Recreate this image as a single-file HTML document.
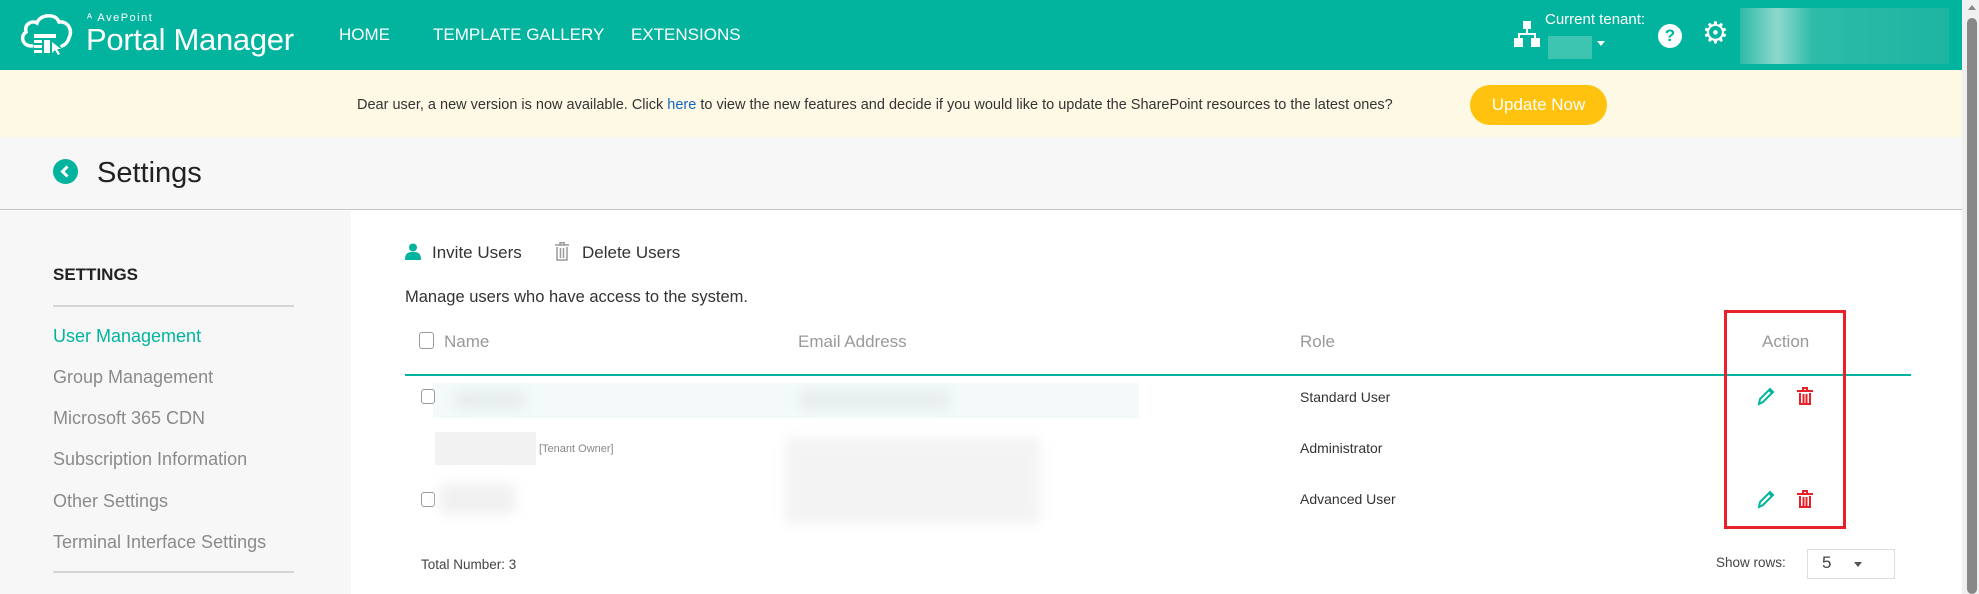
<!DOCTYPE html>
<html><head><meta charset="utf-8"><style>
*{margin:0;padding:0;box-sizing:border-box}
body{width:1979px;height:594px;overflow:hidden;background:#fff;font-family:"Liberation Sans",sans-serif;position:relative;color:#333}
.a{position:absolute;white-space:nowrap}
.hdr{position:absolute;left:0;top:0;width:1962px;height:70px;background:#02b39e}
.nav{color:#fff;font-size:17px;top:25px}
.ban{position:absolute;left:0;top:70px;width:1962px;height:67px;background:#fef9e5}
.ttl{position:absolute;left:0;top:137px;width:1962px;height:73px;background:#f7f7f7;border-bottom:1px solid #c4c4c4}
.side{position:absolute;left:0;top:211px;width:351px;height:383px;background:#f7f7f7}
.si{left:53px;font-size:18px;color:#8a8a8a}
.blur{position:absolute;filter:blur(6px)}
.cb{position:absolute;width:14px;height:15px;border:1px solid #999;border-radius:3px;background:#fff}
.r{font-size:14px;color:#333}
</style></head><body>
<div class="hdr"></div>
<svg class="a" style="left:18px;top:12px" width="56" height="44" viewBox="0 0 56 44">
<path d="M14 34 C4 34 2 24 8 20 C6 12 14 8 19 11 C22 2 38 1 41 10 C50 9 55 18 51 26 C50 30 47 33 44 34" fill="none" stroke="#fff" stroke-width="3.5" stroke-linecap="round"/>
<rect x="16" y="22" width="22" height="4" fill="#fff"/><rect x="16" y="28" width="8" height="3" fill="#fff"/><rect x="16" y="33" width="8" height="3" fill="#fff"/><rect x="16" y="38" width="8" height="3" fill="#fff"/><rect x="26" y="28" width="6" height="13" fill="#fff"/>
<path d="M34 30 L34 41 L37 38 L40 43 L42 42 L39 37 L43 37 Z" fill="#fff"/></svg>
<div class="a" style="left:87px;top:12px;color:#fff;font-size:11px;letter-spacing:1.5px">ᴬ AvePoint</div>
<div class="a" style="left:86px;top:22px;color:#fff;font-size:31px;font-weight:300;letter-spacing:-0.3px">Portal Manager</div>
<div class="a nav" style="left:339px">HOME</div>
<div class="a nav" style="left:433px">TEMPLATE GALLERY</div>
<div class="a nav" style="left:631px">EXTENSIONS</div>
<svg class="a" style="left:1514px;top:21px" width="26" height="26" viewBox="0 0 26 26" fill="#fff"><rect x="9" y="0" width="8" height="8"/><rect x="12" y="8" width="2" height="5"/><rect x="4" y="12" width="18" height="2"/><rect x="4" y="12" width="2" height="6"/><rect x="20" y="12" width="2" height="6"/><rect x="0" y="17" width="9" height="9"/><rect x="17" y="17" width="9" height="9"/></svg>
<div class="a" style="left:1545px;top:11px;color:#fff;font-size:15px">Current tenant:</div>
<div class="a" style="left:1548px;top:36px;width:44px;height:23px;background:#3ec5b2"></div>
<div class="a" style="left:1597px;top:41px;width:0;height:0;border-left:4px solid transparent;border-right:4px solid transparent;border-top:5px solid #fff"></div>
<div class="a" style="left:1658px;top:24px;width:24px;height:24px;border-radius:50%;background:#fff;color:#02b39e;font-weight:bold;font-size:17px;text-align:center;line-height:24px">?</div>
<div class="a" style="left:1702px;top:17px;color:#fff;font-size:30px;line-height:34px">⚙</div>
<div class="a" style="left:1740px;top:8px;width:209px;height:56px;background:linear-gradient(90deg,#2dbba8 0%,#8fd8cd 18%,#2dbba8 35%,#1db5a2 100%)"></div>
<div class="a" style="left:1962px;top:0;width:17px;height:594px;background:#f0f0f0"></div>
<div class="a" style="left:1967px;top:18px;width:10px;height:576px;background:#888;border-radius:5px"></div>
<div class="a" style="left:1968px;top:5px;border-left:4px solid transparent;border-right:4px solid transparent;border-bottom:5px solid #888"></div>

<div class="ban"></div>
<div class="a" style="left:357px;top:97px;font-size:14.5px;color:#333">Dear user, a new version is now available. Click <span style="color:#1565c0">here</span> to view the new features and decide if you would like to update the SharePoint resources to the latest ones?</div>
<div class="a" style="left:1470px;top:85px;width:137px;height:40px;border-radius:20px;background:#ffc20e;color:#fff;font-size:17px;text-align:center;line-height:40px">Update Now</div>

<div class="ttl"></div>
<div class="a" style="left:53px;top:159px;width:25px;height:25px;border-radius:50%;background:#02b39e"></div>
<svg class="a" style="left:53px;top:159px" width="25" height="25"><path d="M14.5 7.5 L9.5 12.5 L14.5 17.5" stroke="#fff" stroke-width="3" fill="none"/></svg>
<div class="a" style="left:97px;top:157px;font-size:29px;color:#222">Settings</div>

<div class="side"></div>
<div class="a" style="left:53px;top:265px;font-size:17px;font-weight:bold;color:#222">SETTINGS</div>
<div class="a" style="left:53px;top:305px;width:241px;height:2px;background:#d6d6d6"></div>
<div class="a si" style="top:326px;color:#02b39e">User Management</div>
<div class="a si" style="top:367px">Group Management</div>
<div class="a si" style="top:408px">Microsoft 365 CDN</div>
<div class="a si" style="top:449px">Subscription Information</div>
<div class="a si" style="top:491px">Other Settings</div>
<div class="a si" style="top:532px">Terminal Interface Settings</div>
<div class="a" style="left:53px;top:571px;width:241px;height:2px;background:#d6d6d6"></div>

<svg class="a" style="left:405px;top:243px" width="16" height="18" fill="#02b39e"><circle cx="8" cy="4.5" r="4"/><path d="M0 17 C0 10 3 9 8 9 C13 9 16 10 16 17 Z"/></svg>
<div class="a" style="left:432px;top:243px;font-size:17px;color:#333">Invite Users</div>
<svg class="a" style="left:555px;top:242px" width="14" height="19" fill="none" stroke="#999" stroke-width="1.5"><path d="M0 3h14M5 3V0.8h4V3M2 5v13h10V5M5.5 6v10M8.5 6v10"/></svg>
<div class="a" style="left:582px;top:243px;font-size:17px;color:#333">Delete Users</div>
<div class="a" style="left:405px;top:288px;font-size:16.5px;color:#333">Manage users who have access to the system.</div>

<div class="cb" style="left:419px;top:332px;width:15px;height:17px"></div>
<div class="a" style="left:444px;top:332px;font-size:17px;color:#999">Name</div>
<div class="a" style="left:798px;top:332px;font-size:17px;color:#999">Email Address</div>
<div class="a" style="left:1300px;top:332px;font-size:17px;color:#999">Role</div>
<div class="a" style="left:1762px;top:332px;font-size:17px;color:#999">Action</div>
<div class="a" style="left:405px;top:374px;width:1506px;height:2px;background:#02b39e"></div>

<div class="a" style="left:433px;top:383px;width:706px;height:35px;background:#f4fafa"></div>
<div class="blur" style="left:455px;top:392px;width:70px;height:16px;background:#e6ecec"></div>
<div class="blur" style="left:800px;top:392px;width:150px;height:16px;background:#e6ecec"></div>
<div class="cb" style="left:421px;top:389px"></div>
<div class="a r" style="left:1300px;top:389px">Standard User</div>

<div class="a" style="left:435px;top:432px;width:101px;height:33px;background:#f2f2f2"></div>
<div class="a" style="left:539px;top:443px;font-size:11px;color:#888">[Tenant Owner]</div>
<div class="blur" style="left:785px;top:438px;width:255px;height:86px;background:#f3f3f3"></div>
<div class="a r" style="left:1300px;top:440px">Administrator</div>

<div class="cb" style="left:421px;top:492px"></div>
<div class="blur" style="left:440px;top:484px;width:75px;height:30px;background:#f0f0f0"></div>
<div class="a r" style="left:1300px;top:491px">Advanced User</div>

<div class="a" style="left:1724px;top:310px;width:122px;height:219px;border:3px solid #e8202a"></div>
<svg class="a" style="left:1757px;top:387px" width="18" height="19"><path d="M2 17 L3 12 L13 2 L16 5 L6 15 Z M12 3 L15 6" stroke="#02b39e" stroke-width="2" fill="none"/></svg>
<svg class="a" style="left:1797px;top:387px" width="16" height="18" fill="none" stroke="#e8202a" stroke-width="2"><path d="M0 4h16M6 4V1h4v3M3 6v11h10V6M6.5 7v9M9.5 7v9"/></svg>
<svg class="a" style="left:1757px;top:490px" width="18" height="19"><path d="M2 17 L3 12 L13 2 L16 5 L6 15 Z M12 3 L15 6" stroke="#02b39e" stroke-width="2" fill="none"/></svg>
<svg class="a" style="left:1797px;top:490px" width="16" height="18" fill="none" stroke="#e8202a" stroke-width="2"><path d="M0 4h16M6 4V1h4v3M3 6v11h10V6M6.5 7v9M9.5 7v9"/></svg>

<div class="a" style="left:421px;top:557px;font-size:13.5px;color:#444">Total Number: 3</div>
<div class="a" style="left:1716px;top:555px;font-size:13.5px;color:#444">Show rows:</div>
<div class="a" style="left:1807px;top:549px;width:88px;height:30px;border:1px solid #ddd;background:#fff"></div>
<div class="a" style="left:1822px;top:553px;font-size:17px;color:#444">5</div>
<div class="a" style="left:1854px;top:562px;border-left:4px solid transparent;border-right:4px solid transparent;border-top:5px solid #555"></div>
</body></html>
